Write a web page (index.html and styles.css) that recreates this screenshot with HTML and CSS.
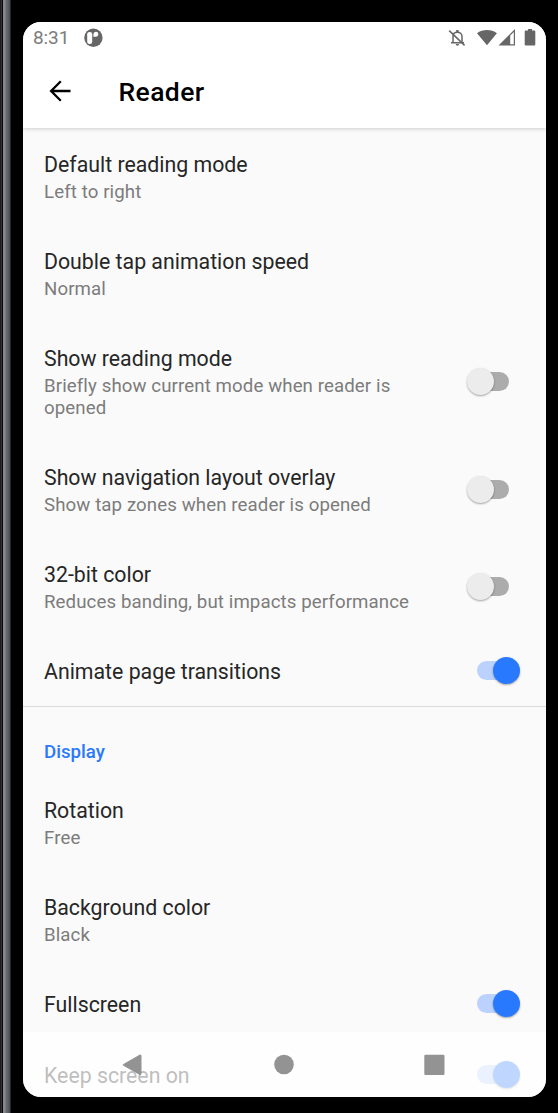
FILE: index.html
```html
<!DOCTYPE html>
<html lang="en">
<head>
<meta charset="utf-8">
<title>Reader</title>
<link rel="stylesheet" href="styles.css">
</head>
<body>
<div class="phone">
  <main class="screen">
    <header class="top">
      <div class="status">
        <span class="clock">8:31</span>
        <svg class="app-icon" width="20" height="20" viewBox="0 0 20 20"><circle cx="10.400" cy="9.700" r="9.200" fill="#666"/><rect x="4.200" y="3.900" width="5" height="12.200" rx="2.300" fill="#fff"/><path d="M10.400 6.200a2.500 2.500 0 1 1 2.800 2.500h-2.800z" fill="#fff"/></svg>
        <svg class="status-icons" width="90" height="20" viewBox="0 0 90 20">
          <g fill="none" stroke="#666" stroke-width="1.5"><path d="M5 14.700V8.200C5 5.700 7 4.200 9.400 4.200s4.600 1.800 4.600 4.300v6.200M3 14.700h13"/><path d="M1.200 2.600 16.600 17.400"/></g>
          <path d="M8.200 2h2.400v2.500H8.200zM7.700 16h3.400a1.700 1.700 0 0 1-3.400 0z" fill="#666"/>
          <path d="M29 5.300C34.500 1 43.500 1 48.900 5.300L39 17.300z" fill="#666"/>
          <path d="M50.500 17.500 67 1v16.500z" fill="#666"/><path d="M62.200 7.400 65.800 3.900v12.300h-3.600z" fill="#fff"/>
          <path d="M80 1h4v1.600h2.300q1 0 1 1v12.900q0 1-1 1h-8.600q-1 0-1-1V3.600q0-1 1-1H80z" fill="#666"/>
        </svg>
      </div>
      <div class="toolbar">
        <svg class="back" width="24" height="24" viewBox="0 0 24 24" fill="none" stroke="#000" stroke-width="2.300"><path d="M22.500 12H3.200M12.800 2.300 3.100 12l9.700 9.700"/></svg>
        <h1 class="heading">Reader</h1>
      </div>
    </header>
    <section class="list">
      <div class="row"><div class="label"><div class="name">Default reading mode</div><div class="summary">Left to right</div></div></div>
      <div class="row"><div class="label"><div class="name">Double tap animation speed</div><div class="summary">Normal</div></div></div>
      <div class="row"><div class="label"><div class="name">Show reading mode</div><div class="summary">Briefly show current mode when reader is<br>opened</div></div><span class="switch"></span></div>
      <div class="row"><div class="label"><div class="name">Show navigation layout overlay</div><div class="summary">Show tap zones when reader is opened</div></div><span class="switch"></span></div>
      <div class="row"><div class="label"><div class="name">32-bit color</div><div class="summary">Reduces banding, but impacts performance</div></div><span class="switch"></span></div>
      <div class="row"><div class="label"><div class="name">Animate page transitions</div></div><span class="switch on"></span></div>
    </section>
    <section class="list display">
      <h2 class="category">Display</h2>
      <div class="row"><div class="label"><div class="name">Rotation</div><div class="summary">Free</div></div></div>
      <div class="row"><div class="label"><div class="name">Background color</div><div class="summary">Black</div></div></div>
      <div class="row"><div class="label"><div class="name">Fullscreen</div></div><span class="switch on"></span></div>
      <div class="row"><div class="label"><div class="name">Keep screen on</div></div><span class="switch on"></span></div>
    </section>
    <nav class="navbar">
      <svg width="523" height="65" viewBox="0 0 523 65" fill="#939393"><path d="M100.500 32.500 117 23q1-.4 1 .7v18.100q0 1.200-1 .7L100.500 33.300q-.8-.4 0-.8z" stroke="#939393"/><circle cx="261" cy="32.500" r="9.800"/><rect x="401.300" y="22.700" width="20.200" height="20.200" rx="1.200"/></svg>
    </nav>
  </main>
</div>
</body>
</html>
```
FILE: styles.css
```css
* { box-sizing: border-box; }
body { margin: 0; background: #000; font-family: Roboto, "Liberation Sans", sans-serif; }
.phone {
  width: 558px; height: 1113px; padding: 22px 12px 16px 23px; overflow: hidden;
  background: linear-gradient(90deg, #1c1d1f 0 1px, #303236 1px 2px, #08080a 2px 3px, #85878a 3px 5px, #696c71 6px, #5d6066 8px, #484b51 10px, #000 11px);
}
.screen { position: relative; width: 523px; height: 1075px; overflow: hidden; border-radius: 18px; background: #fafafa; }
.top { height: 106px; background: #fff; box-shadow: 0 1px 4px rgba(0,0,0,.18); }
.status { display: flex; align-items: center; height: 32px; padding: 0 8px 0 10px; color: #7c7c7c; }
.clock { width: 50px; font-size: 19px; line-height: 32px; letter-spacing: -.1px; }
.status-icons { margin-left: auto; }
.toolbar { display: flex; align-items: center; height: 74px; padding: 0 0 0 25px; }
.heading { margin: 2px 0 0 46.500px; font-size: 26.500px; font-weight: 500; line-height: 34px; letter-spacing: .4px; color: #000; }
.list { padding-top: 1px; }
.row { display: flex; align-items: center; justify-content: space-between; padding: 22px 26px 22px 21px; }
.label { display: flex; flex-direction: column; }
.name { font-size: 21.300px; line-height: 27px; color: #262626; white-space: nowrap; }
.summary { margin-bottom: 1px; padding-top: 3px; font-size: 18.670px; line-height: 22px; letter-spacing: .1px; color: #7c7c7c; white-space: nowrap; }
.switch { display: flex; align-items: center; width: 32px; height: 19px; margin: 0 11px 2px 0; border-radius: 10px; background: #acacac; }
.switch::before { content: ""; flex: none; width: 27px; height: 27px; margin-left: -10px; border-radius: 50%; background: #ececec; box-shadow: 0 1px 2px rgba(0,0,0,.35); }
.switch.on { background: #bad2fd; justify-content: flex-end; }
.switch.on::before { margin: 0 -11px 0 0; background: #2979ff; }
.display { margin-top: -1px; padding: 0; border-top: 1px solid #dadada; }
.category { margin: 0; padding: 31px 21px 9px; font-size: 18.670px; font-weight: 500; line-height: 28px; color: #2979ff; }
.navbar { position: absolute; left: 0; bottom: 0; width: 523px; height: 65px; background: rgba(255,255,255,.7); }
```
